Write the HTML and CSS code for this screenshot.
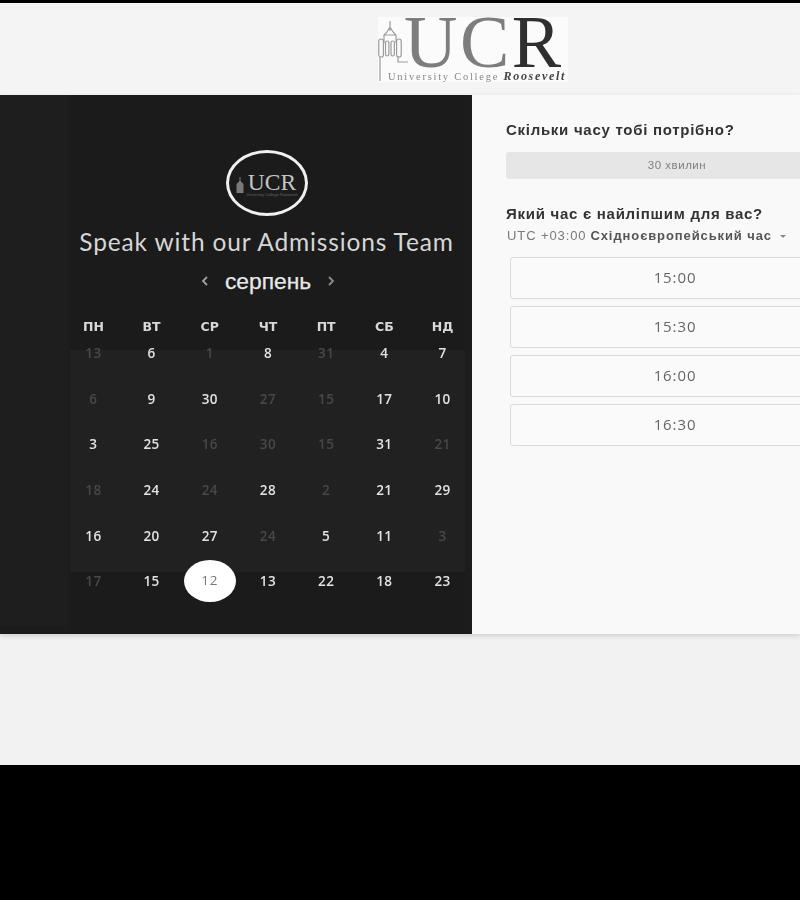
FILE: index.html
```html
<!DOCTYPE html>
<html lang="uk">
<head>
<meta charset="utf-8">
<title>UCR</title>
<link rel="stylesheet" href="styles.css">
</head>
<body>
<div class="page">
  <header class="top">
    <div class="logo">
      <svg class="tower" viewBox="0 0 30 66" width="30" height="66" fill="none" stroke="#9c9c9c" stroke-width="1.2">
        <path d="M12 4v10M12 10l-3 5-3 3v8M12 10l3 5 3 3v8M6 18h12"/>
        <rect x="0.8" y="22" width="4.6" height="18" rx="2.3"/>
        <rect x="7.5" y="24" width="3.4" height="15" rx="1.7"/>
        <rect x="13" y="24" width="3.4" height="15" rx="1.7"/>
        <rect x="18.6" y="22" width="4.6" height="18" rx="2.3"/>
        <path d="M2 40v24M20 40v5h10"/>
      </svg>
      <div class="logo-mark"><span class="lm-u">UC</span><span class="lm-r">R</span></div>
      <div class="logo-sub">University College <em>Roosevelt</em></div>
    </div>
  </header>
  <main class="main">
    <section class="dark">
      <div class="dark-side"></div>
      <div class="dark-body">
        <div class="badge">
          <svg class="badge-tower" viewBox="0 0 8 16" width="8" height="16" fill="#7a7a7a"><path d="M3.5 0h1v4l3 3v9H.5V7l3-3z"/></svg>
          <div class="badge-inner"><span class="badge-text">UCR</span><span class="badge-sub">University College Roosevelt</span></div>
        </div>
        <h1 class="title">Speak with our Admissions Team</h1>
        <div class="month">
          <svg class="chev" viewBox="0 0 7 10" width="7" height="10" fill="none" stroke="#a0a0a0" stroke-width="1.8"><path d="M6 1 2 5l4 4"/></svg>
          <span class="month-name">серпень</span>
          <svg class="chev" viewBox="0 0 7 10" width="7" height="10" fill="none" stroke="#8c8c8c" stroke-width="1.8"><path d="M1 1l4 4-4 4"/></svg>
        </div>
        <div class="cal">
          <div class="dow">ПН</div><div class="dow">ВТ</div><div class="dow">СР</div><div class="dow">ЧТ</div><div class="dow">ПТ</div><div class="dow">СБ</div><div class="dow">НД</div>
          <div class="d off">13</div><div class="d">6</div><div class="d off">1</div><div class="d">8</div><div class="d off">31</div><div class="d">4</div><div class="d">7</div>
          <div class="d off">6</div><div class="d">9</div><div class="d">30</div><div class="d off">27</div><div class="d off">15</div><div class="d">17</div><div class="d">10</div>
          <div class="d">3</div><div class="d">25</div><div class="d off">16</div><div class="d off">30</div><div class="d off">15</div><div class="d">31</div><div class="d off">21</div>
          <div class="d off">18</div><div class="d">24</div><div class="d off">24</div><div class="d">28</div><div class="d off">2</div><div class="d">21</div><div class="d">29</div>
          <div class="d">16</div><div class="d">20</div><div class="d">27</div><div class="d off">24</div><div class="d">5</div><div class="d">11</div><div class="d off">3</div>
          <div class="d off">17</div><div class="d">15</div><div class="d sel"><span>12</span></div><div class="d">13</div><div class="d">22</div><div class="d">18</div><div class="d">23</div>
        </div>
      </div>
    </section>
    <section class="side">
      <h2 class="q">Скільки часу тобі потрібно?</h2>
      <div class="dur">30 хвилин</div>
      <h2 class="q q2">Який час є найліпшим для вас?</h2>
      <div class="tz">UTC +03:00 <b>Східноєвропейський час</b><span class="caret"></span></div>
      <div class="slots">
        <button class="slot">15:00</button>
        <button class="slot">15:30</button>
        <button class="slot">16:00</button>
        <button class="slot">16:30</button>
      </div>
    </section>
  </main>
  <div class="foot"></div>
</div>
</body>
</html>
```
FILE: styles.css
```css
* { box-sizing: border-box; }
html, body { margin: 0; padding: 0; background: #000; }
body { width: 800px; height: 900px; overflow: hidden; font-family: "Liberation Sans", Arial, sans-serif; }
.page { padding-top: 3px; width: 800px; }
.top { height: 92px; background: #f4f4f4; display: flex; padding: 14px 0 0 378px; }
.logo { width: 190px; height: 65px; background: #fbfbfb; position: relative; filter: blur(.6px); }
.tower { position: absolute; left: 0; top: 0; }
.logo-mark { position: absolute; left: 26px; top: 0; font: 74px/50px "Liberation Serif", serif; letter-spacing: 2.5px; white-space: nowrap; }
.lm-u { color: #7d7d7d; }
.lm-r { color: #2f2f2f; }
.logo-sub { position: absolute; left: 10px; top: 53px; font: 10.5px/12px "Liberation Serif", serif; letter-spacing: 1.75px; color: #888; white-space: nowrap; }
.logo-sub em { color: #444; font-weight: bold; font-size: 12px; letter-spacing: 1.7px; }

.main { display: flex; height: 539px; box-shadow: 0 2px 5px rgba(0,0,0,.15); position: relative; }
.dark { width: 472px; background: #1c1c1c; display: flex; }
.dark-side { width: 68px; background: #1e1e1e; margin-bottom: 8px; }
.dark-body { flex: 1; display: flex; flex-direction: column; align-items: center; padding-top: 55px; margin-left: 2px; background: linear-gradient(#1b1b1b 255px, #212121 255px, #212121 477px, #1b1b1b 477px) left top / 395px 100% no-repeat; filter: blur(.35px); }
.badge { width: 82px; height: 66px; margin-left: -8px; border: 3px solid #f0f0f0; border-radius: 50%; display: flex; align-items: center; justify-content: center; gap: 2px; flex: none; padding-top: 2px; }
.badge-tower { margin-top: 2px; }
.badge-inner { display: flex; flex-direction: column; align-items: center; }
.badge-text { font: 23.5px/20px "Liberation Serif", serif; color: #c4c4c4; }
.badge-sub { font: 4px/5px "Liberation Sans", sans-serif; color: #666; white-space: nowrap; }
.title { margin: 12px 0 0 -9px; font: 400 24.5px/28px Lato, sans-serif; letter-spacing: .85px; color: #d6d6d6; white-space: nowrap; }
.month { margin: 12px 0 0 -6px; display: flex; align-items: center; gap: 17px; color: #e8e8e8; }
.month-name { font-size: 22.8px; line-height: 26px; -webkit-text-stroke: .25px #e8e8e8; }
.chev { flex: none; }
.cal { margin: 23px 0 0 -6px; display: grid; grid-template-columns: repeat(7, 58.2px); grid-template-rows: 28px repeat(6, 45.7px); width: 407.4px; }
.dow { font: bold 12.5px/20px "DejaVu Sans", sans-serif; color: #d8d8d8; text-align: center; }
.d { font: 600 13.5px/16px "Open Sans", sans-serif; letter-spacing: .4px; color: #e2e2e2; text-align: center; position: relative; }
.off { color: #484848; }
.sel { font-weight: 400; color: #777; }
.sel span { position: absolute; left: 3px; top: -13px; width: 52px; height: 42px; padding-bottom: 3px; border-radius: 50%; background: #fff; display: flex; align-items: center; justify-content: center; letter-spacing: .6px; }

.side { flex: 1; background: #f9f9f9; padding: 25px 0 0 34px; overflow: hidden; filter: blur(.35px); }
.q { margin: 0; font: bold 15px/20px "Liberation Sans", sans-serif; letter-spacing: .72px; color: #333; white-space: nowrap; }
.dur { margin-top: 12px; width: 320px; height: 27px; padding-left: 22px; background: #e6e6e6; border-radius: 3px; font: 11.5px/27px "Liberation Sans", sans-serif; letter-spacing: .5px; color: #808080; text-align: center; }
.q2 { margin-top: 25px; }
.tz { margin: 3px 0 0 1px; font: 13px/18px "Liberation Sans", sans-serif; letter-spacing: .9px; color: #7a7a7a; white-space: nowrap; display: flex; align-items: center; gap: 4px; }
.tz b { color: #555; }
.caret { margin-left: 4px; width: 0; height: 0; border: 3.5px solid transparent; border-top-color: #888; border-bottom-width: 0; }
.slots { margin: 12px 0 0 4px; display: flex; flex-direction: column; gap: 7px; }
.slot { display: block; width: 332px; height: 42px; padding: 0 0 3px; background: #fafafa; border: 1px solid #dadada; border-radius: 3px; font: 15px/20px "Open Sans", sans-serif; letter-spacing: .9px; color: #666; text-align: center; text-indent: -2px; }

.foot { height: 131px; background: #f2f2f2; }
```
